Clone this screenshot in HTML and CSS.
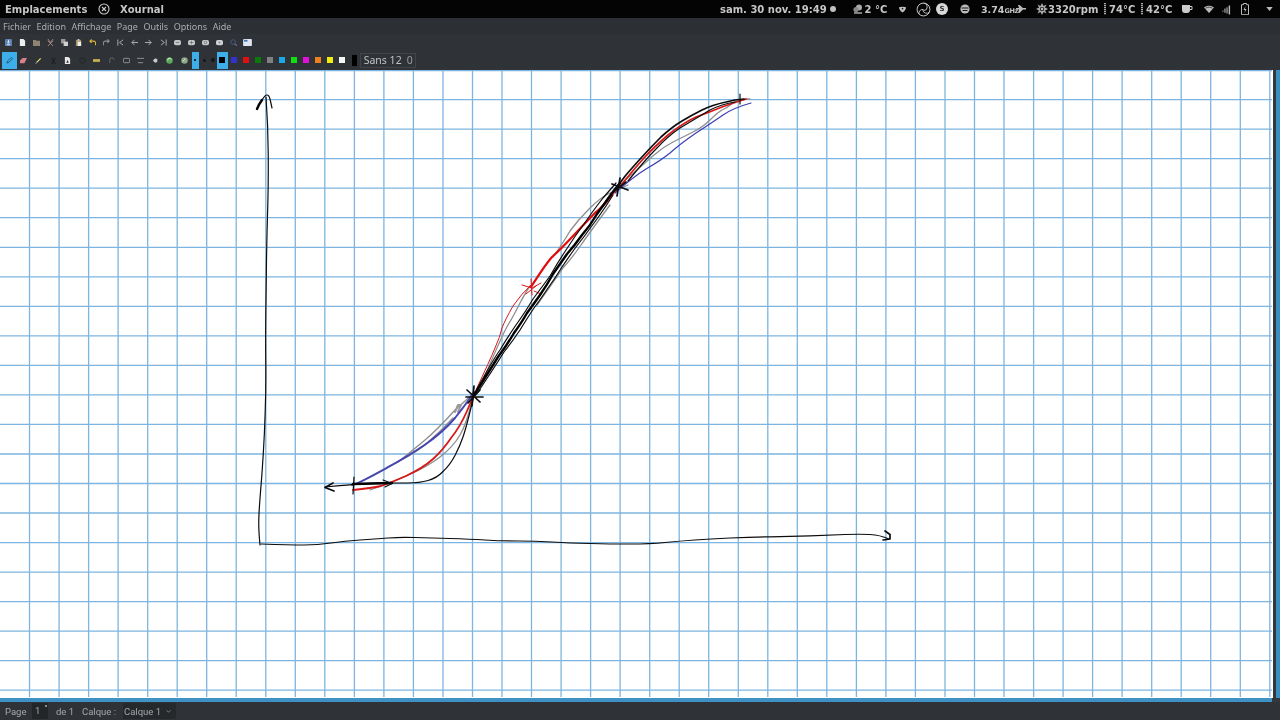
FILE: index.html
```html
<!DOCTYPE html>
<html lang="fr">
<head>
<meta charset="utf-8">
<title>Xournal</title>
<link rel="stylesheet" href="styles.css">
</head>
<body>
<div class="screen">
  <header class="topbar">
    <div class="top-left">
      <span class="places">Emplacements</span>
      <svg class="app-ico" viewBox="0 0 12 12"><circle cx="6" cy="6" r="5" fill="none" stroke="#ccc" stroke-width="1.1"/><path d="M4 4l4 4M8 4l-4 4" stroke="#ccc" stroke-width="1.1"/></svg>
      <span class="appname">Xournal</span>
    </div>
    <div class="top-right">
      <span class="clock">sam. 30 nov. 19:49</span>
      <i class="dot-w"></i>
      <svg class="t-ico weather" viewBox="0 0 10 10"><circle cx="6" cy="3.5" r="3" fill="#aaa"/><circle cx="3" cy="5.5" r="2.6" fill="#888"/><path d="M1 9h8" stroke="#aaa" stroke-width="1.5"/></svg>
      <span class="temp">2 °C</span>
      <svg class="t-ico shield" viewBox="0 0 8 8"><path d="M0 1.500C2 .5 6 .5 8 1.500 8 4 6 6 4 7.500 2 6 0 4 0 1.500z" fill="#c4c4c4"/><circle cx="4" cy="3" r="1" fill="#222"/></svg>
      <svg class="t-ico obs" viewBox="0 0 20 20"><circle cx="10" cy="10" r="8.6" fill="none" stroke="#c8c8c8" stroke-width="1.3"/><path d="M10 1.500a5 5 0 0 1 0 10M18 13a5 5 0 0 1-9-3M4 16a5 5 0 0 1 6-6" fill="none" stroke="#c8c8c8" stroke-width="1.200"/></svg>
      <span class="skype">S</span>
      <svg class="t-ico smile" viewBox="0 0 10 10"><circle cx="5" cy="5" r="4.6" fill="#bbb"/><path d="M1.500 4h7M2.500 6.500h5" stroke="#000" stroke-width=".9"/></svg>
      <span class="freq">3.74<small>GHz</small></span>
      <svg class="t-ico plane" viewBox="0 0 10 8"><path d="M0 3h3L2 0h1.500L7 3h3v1.500H7L3.500 8H2l1-3.500H0z" fill="#bbb"/></svg>
      <svg class="t-ico fan" viewBox="0 0 12 12"><circle cx="6" cy="6" r="1.4" fill="#bbb"/><path d="M6 0l2 4H4zM6 12l-2-4h4zM0 6l4-2v4zM12 6L8 8V4zM1.500 1.500l4 2-2 2zM10.500 10.500l-4-2 2-2zM10.500 1.500l-2 4-2-2zM1.500 10.500l2-4 2 2z" fill="#aaa"/></svg>
      <span class="rpm">3320rpm</span>
      <i class="gauge gauge-a"></i>
      <span class="heat">74°C</span>
      <i class="gauge gauge-b"></i>
      <span class="heat">42°C</span>
      <svg class="t-ico cup" viewBox="0 0 12 10"><path d="M1 1h8v5a3 3 0 0 1-3 3H4a3 3 0 0 1-3-3z" fill="#ccc"/><path d="M9 2.500h2v3H9" fill="none" stroke="#ccc"/></svg>
      <svg class="t-ico wifi" viewBox="0 0 10 8"><path d="M0 2.500C3 0 7 0 10 2.500L5 8z" fill="#bbb"/><path d="M1.500 3.200C4 1.800 6 1.800 8.500 3.200" stroke="#000" stroke-width=".6" fill="none"/></svg>
      <svg class="t-ico vol" viewBox="0 0 10 11"><path d="M.5 6.500h1V8h-1zM2.700 4.500h1.200V9H2.700zM5 3h1.200v7H5zM7.400 1H9v10H7.400z" fill="#bbb"/></svg>
      <svg class="t-ico batt" viewBox="0 0 8 12"><path d="M2.500.5h3v1.200h2v10H.5v-10h2z" fill="none" stroke="#bbb"/><path d="M4.500 3L2.500 7H4L3.500 10 5.500 6H4z" fill="#bbb"/></svg>
      <svg class="t-ico caret" viewBox="0 0 8 5"><path d="M0 0h8L4 5z" fill="#bbb"/></svg>
    </div>
  </header>

  <nav class="menubar">
    <span>Fichier</span><span>Edition</span><span>Affichage</span><span>Page</span><span>Outils</span><span>Options</span><span>Aide</span>
  </nav>

  <div class="toolbar-a">
    <span class="ta"><svg viewBox="0 0 8 8"><rect width="8" height="8" rx="1" fill="#5a7fb0"/><path d="M4 1v3M2.500 3L4 5l1.500-2M2 6.500h4" stroke="#e6eef8" fill="none"/></svg></span>
    <span class="ta"><svg viewBox="0 0 8 8"><path d="M1 0h4l2 2v6H1z" fill="#eee"/></svg></span>
    <span class="ta"><svg viewBox="0 0 8 8"><path d="M0 1h3l1 1h4v6H0z" fill="#8d8571"/></svg></span>
    <span class="ta"><svg viewBox="0 0 8 8"><path d="M1 0l3 4 3-4M1 8l6-6M7 8L1 2" stroke="#a98a8a" stroke-width="1.100" fill="none"/></svg></span>
    <span class="ta"><svg viewBox="0 0 8 8"><rect x="0" y="0" width="5" height="5" fill="#9a9a9a"/><rect x="3" y="3" width="5" height="5" fill="#d0d0d0"/></svg></span>
    <span class="ta"><svg viewBox="0 0 8 8"><rect x="1" y="1" width="6" height="7" fill="#a88f62"/><rect x="3" y="3" width="4" height="5" fill="#eee"/><rect x="3" y="0" width="2" height="2" fill="#ccc"/></svg></span>
    <span class="ta"><svg viewBox="0 0 8 8"><path d="M7.500 7V4.500a2 2 0 0 0-2-2H1M3 .5L1 2.500l2 2" stroke="#d8b23c" stroke-width="1.300" fill="none"/></svg></span>
    <span class="ta"><svg viewBox="0 0 8 8"><path d="M.5 7V4.500a2 2 0 0 1 2-2H7M5 .5l2 2-2 2" stroke="#8c8f92" stroke-width="1.300" fill="none"/></svg></span>
    <span class="ta"><svg viewBox="0 0 8 8"><path d="M1 .5v7M7 1L3 4l4 3" stroke="#aeb2b6" stroke-width="1.100" fill="none"/></svg></span>
    <span class="ta"><svg viewBox="0 0 8 8"><path d="M8 4H1M4 1L1 4l3 3" stroke="#aeb2b6" stroke-width="1.100" fill="none"/></svg></span>
    <span class="ta"><svg viewBox="0 0 8 8"><path d="M0 4h7M4 1l3 3-3 3" stroke="#aeb2b6" stroke-width="1.100" fill="none"/></svg></span>
    <span class="ta"><svg viewBox="0 0 8 8"><path d="M7 .5v7M1 1l4 3-4 3" stroke="#aeb2b6" stroke-width="1.100" fill="none"/></svg></span>
    <span class="ta"><svg viewBox="0 0 8 8"><rect y="1" width="8" height="6" rx="2" fill="#c4c6c8"/><path d="M2 4h4" stroke="#777"/></svg></span>
    <span class="ta"><svg viewBox="0 0 8 8"><rect y="1" width="8" height="6" rx="2" fill="#c4c6c8"/><path d="M4 2v4M2 4h4" stroke="#777"/></svg></span>
    <span class="ta"><svg viewBox="0 0 8 8"><rect y="1" width="8" height="6" rx="2" fill="#c4c6c8"/><circle cx="4" cy="4" r="1.500" fill="none" stroke="#777"/></svg></span>
    <span class="ta"><svg viewBox="0 0 8 8"><rect y="1" width="8" height="6" rx="2" fill="#d0d2d4"/><path d="M3 3h2v2H3z" fill="#888"/></svg></span>
    <span class="ta"><svg viewBox="0 0 8 8"><circle cx="3.500" cy="3.500" r="2.700" fill="none" stroke="#4a5a85" stroke-width="1.100"/><path d="M5.500 5.500L8 8" stroke="#6a7a9a" stroke-width="1.200"/></svg></span>
    <span class="ta"><svg viewBox="0 0 10 8"><rect width="10" height="8" rx="1" fill="#dfe6f0"/><rect x="1" y="1" width="4" height="2" fill="#3f78c0"/></svg></span>
  </div>

  <div class="toolbar-b">
    <span class="tb on"><svg viewBox="0 0 8 8"><path d="M1 7l1-2.500L6 .5 7.500 2 3.500 6z" fill="none" stroke="#26546f" stroke-width="1"/></svg></span>
    <span class="tb"><svg viewBox="0 0 8 8"><path d="M0 4l3-3h5L5 7H0z" fill="#d9808a"/></svg></span>
    <span class="tb"><svg viewBox="0 0 8 8"><path d="M1 7l1-2L6 1l1 1-4 4z" fill="#dcdc60"/><path d="M0 8l2-1" stroke="#7474c8"/></svg></span>
    <span class="tb"><svg viewBox="0 0 8 8"><path d="M2 1l4 7M6 1L2 8" stroke="#15171a" stroke-width="1"/></svg></span>
    <span class="tb"><svg viewBox="0 0 8 8"><path d="M1 0h4l2 2v6H1z" fill="#e8e8e8"/><path d="M2.500 6.500L4 3.500l1.500 3z" fill="#333"/></svg></span>
    <span class="tb"><svg viewBox="0 0 8 8"><circle cx="4" cy="4" r="3" fill="none" stroke="#1c1f23" stroke-dasharray="1.500 .7"/></svg></span>
    <span class="tb"><svg viewBox="0 0 10 6"><rect y="1" width="10" height="4" fill="#c4b04e"/></svg></span>
    <span class="tb"><svg viewBox="0 0 8 8"><path d="M2 7V4a2.500 2.500 0 0 1 5-1" fill="none" stroke="#6a6e72"/></svg></span>
    <span class="tb"><svg viewBox="0 0 8 8"><rect x=".5" y="1.500" width="7" height="5" rx="1" fill="none" stroke="#9a9ea2"/></svg></span>
    <span class="tb"><svg viewBox="0 0 8 8"><path d="M0 1.500h8M1 6.500h6" stroke="#9a9ea2"/></svg></span>
    <span class="tb"><svg viewBox="0 0 8 8"><path d="M1 4l3-3v1h2v4H4v1z" fill="#c8cacc"/></svg></span>
    <span class="tb"><svg viewBox="0 0 8 8"><circle cx="4" cy="4" r="3.700" fill="#5aa85a"/><path d="M2 4a2 2 0 0 1 4-1" stroke="#e4f0e4" fill="none"/></svg></span>
    <span class="tb"><svg viewBox="0 0 8 8"><circle cx="4" cy="4" r="3.700" fill="#88a888"/><path d="M2 5l3-3" stroke="#eee"/></svg></span>
    <span class="thin on"><i class="pt"></i></span>
    <span class="thin wide"><i class="pt mid"></i></span>
    <span class="thin wide2"><i class="pt big"></i></span>
    <span class="swatch-on"><i class="sq"></i></span>
    <i class="col c1"></i><i class="col c2"></i><i class="col c3"></i><i class="col c4"></i><i class="col c5"></i><i class="col c6"></i><i class="col c7"></i><i class="col c8"></i><i class="col c9"></i><i class="col c10"></i>
    <i class="blackbar"></i>
    <span class="fontbox">Sans 12<em>0</em></span>
  </div>

  <main class="workspace">
    <div class="view">
      <svg class="sheet" viewBox="0 70 1273 628">
        <rect x="0" y="70" width="1273" height="628" fill="#fff"/>
        <path class="grid" d="M29.500 70V697M59.100 70V697M88.600 70V697M118.100 70V697M147.700 70V697M177.200 70V697M206.700 70V697M236.200 70V697M265.800 70V697M295.300 70V697M324.800 70V697M354.400 70V697M383.900 70V697M413.400 70V697M443 70V697M472.500 70V697M502 70V697M531.500 70V697M561.100 70V697M590.600 70V697M620.100 70V697M649.700 70V697M679.200 70V697M708.700 70V697M738.300 70V697M767.800 70V697M797.300 70V697M826.800 70V697M856.400 70V697M885.900 70V697M915.400 70V697M945 70V697M974.500 70V697M1004 70V697M1033.600 70V697M1063.100 70V697M1092.600 70V697M1122.100 70V697M1151.700 70V697M1181.200 70V697M1210.700 70V697M1240.300 70V697M1269.800 70V697"/>
        <path class="grid" d="M0 70.500H1272M0 99.600H1272M0 129.100H1272M0 158.700H1272M0 188.200H1272M0 217.700H1272M0 247.300H1272M0 276.800H1272M0 306.300H1272M0 335.800H1272M0 365.400H1272M0 394.900H1272M0 424.400H1272M0 454H1272M0 483.500H1272M0 513H1272M0 542.600H1272M0 572.100H1272M0 601.600H1272M0 631.100H1272M0 660.700H1272M0 690.200H1272"/>

        <!-- axes -->
        <path class="ink k1" d="M266 97Q268 125 268.200 152Q268.500 180 267.800 205Q267 230 266.500 260Q266 290 265.800 315Q265.500 340 265.800 365Q266 390 265.200 412Q264.500 435 263.200 455Q262 475 260.500 492Q259 510 258.800 520Q258.500 530 260 545"/>
        <path class="ink k3" d="M257 109Q259 104 262 100"/>
        <path class="ink k1" d="M262 100Q265 95 267 95T270 99L272 108"/>
        <path class="ink k1" d="M261 544Q290 545 304 545Q318 545 331 543Q345 541 360 540Q375 539 388 538Q400 537 415 537.500Q430 538 450 538.500Q470 539 485 540Q500 541 518 541Q535 541 552 542Q570 543 590 543.500Q610 544 630 544Q650 544 665 542.500Q680 541 695 540Q710 539 730 538Q750 537 770 536.800Q790 536.500 810 535.800Q830 535 845 534.500Q860 534 870 534.500Q880 535 889 539"/>
        <path class="ink k2" d="M885 531L890 534.500 890 539 883 540"/>

        <!-- grey attempts -->
        <path class="ink g1" d="M356 484Q387 467 398 462Q413 450 425 440Q437 430 455 410L474 393"/>
        <path class="ink g1" d="M370 490Q393 482 410 474Q427 467 440 457Q453 447 460 435Q467 423 472 400"/>
        <path class="ink g1" d="M387 467Q410 457 425 445Q440 432 453 418"/>
        <path class="ink g2" d="M455 412L458 405 461 405 458 412"/>
        <path class="ink g1" d="M484 378Q503 333 508 325Q513 317 520 303Q527 290 530 286"/>
        <path class="ink g1" d="M553 257Q563 243 570 231Q578 220 589 209Q600 198 608 194Q617 190 628 185"/>
        <path class="ink g1" d="M537 305Q555 280 563 268Q572 258 581 245Q590 232 610 205"/>
        <path class="ink g1" d="M622 183Q645 163 654 155Q663 147 673 142Q683 137 693 132Q703 127 710 120Q717 113 722 110Q727 108 733 103Q740 99 750 99"/>

        <!-- blue -->
        <path class="ink b1" d="M352 485Q360 483 385 469Q410 455 426 444Q443 432 455 418Q467 403 474 392"/>
        <path class="ink b2" d="M615 193Q633 177 646 169Q660 161 670 153Q680 144 696 133Q713 122 723 115Q733 108 751 103"/>

        <!-- red -->
        <path class="ink r1" d="M353 490Q372 488 381 486Q390 483 406 476Q423 468 433 459Q443 450 451 438Q460 427 467 411Q473 397 475 392"/>
        <path class="ink r2" d="M476 390Q490 360 495 348Q500 337 502 328Q505 320 513 306Q522 293 531 285"/>
        <path class="ink r3" d="M531 287Q545 265 552 257Q560 250 574 235Q588 220 595 213Q603 207 610 197L617 188"/>
        <path class="ink r1" d="M617 190Q635 168 644 158Q653 148 668 135Q683 123 696 117Q710 112 722 107Q733 103 746 99"/>
        <path class="ink r2" d="M522 285L532 288 541 283M531 279L532 295M526 294L536 286M534 291L541 294"/>

        <!-- black curves -->
        <path class="ink k1" d="M325 487Q350 484.500 362 483.800Q375 483 385 483Q395 483 407 483Q420 483 428 480.500Q437 478 443 471.500Q450 465 455 455.500Q460 446 463.500 435.500Q467 425 474 395"/>
        <path class="ink k3" d="M353 484L392 483"/>
        <path class="ink k2" d="M333 483L325 487.500 334 491"/>
        <path class="ink k1" d="M354 477L353 494M383 480L392 483.500 385 487"/>
        <path class="ink k3" d="M474 395Q490 370 498 357Q507 345 514 333Q522 322 527 313Q533 305 540 295Q547 285 553 274Q560 264 567 254Q575 245 582 235Q590 226 597 214Q605 203 612 193L620 183"/>
        <path class="ink k1" d="M478 392Q496 365 504 352Q512 342 520 330Q528 317 534 308Q540 300 548 288Q556 277 562 267Q568 258 576 247Q584 237 591 227Q598 218 606 206L613 195"/>
        <path class="ink k1" d="M477 389Q494 358 500 350Q507 338 516 325Q526 311 533 299Q542 287 550 276Q558 262 566 250Q575 236 584 224Q595 208 603 198L616 183"/>
        <path class="ink k2" d="M612 193Q620 183 626 175Q632 168 641 158Q650 148 661 137Q672 127 682 121Q692 115 702 110Q712 105 726 102Q735 99.500 744 99"/>
        <path class="ink k1" d="M628 181Q645 160 656 149Q668 136 680 128Q695 119 710 110Q722 104 735 102"/>
        <path class="ink k2" d="M466 397H483M474 386L472 406M467 390L480 402M480 390L468 403"/>
        <path class="ink k2" d="M612 184L628 190M620 178L617 196M613 192L626 182"/>
        <path class="ink k1" d="M740 94V104"/>
      </svg>
      <div class="vscroll"></div>
    </div>
    <div class="hscroll"></div>
  </main>

  <footer class="statusbar">
    <span class="lbl-page">Page</span>
    <span class="spin">1<i class="spin-arrow"></i></span>
    <span class="lbl-of">de 1</span>
    <span class="lbl-layer">Calque :</span>
    <span class="combo">Calque 1<svg viewBox="0 0 6 4"><path d="M.5.500L3 3 5.500.500" fill="none" stroke="#9a9ea2"/></svg></span>
  </footer>
</div>
</body>
</html>
```

FILE: styles.css
```css
* { box-sizing: border-box; }
html, body { margin: 0; padding: 0; background: #2f3236; overflow: hidden; }
.screen {
  width: 1280px; height: 720px; display: flex; flex-direction: column;
  font-family: "Noto Sans", sans-serif; filter: blur(.35px);
}
.topbar {
  height: 18px; background: #040404; display: flex; justify-content: space-between;
  align-items: center; font-family: "DejaVu Sans", sans-serif; font-weight: bold;
  font-size: 10px; color: #c6c6c6; flex: none;
}
.top-left { display: flex; align-items: center; padding-left: 5px; }
.places { width: 87px; }
.app-ico { width: 12px; height: 12px; margin-left: 6px; }
.appname { margin-left: 10px; }
.top-right { display: flex; align-items: center; padding-right: 7px; }
.top-right > * { flex: none; }
.t-ico { display: block; }
.clock { width: 107px; white-space: nowrap; }
.dot-w { width: 6px; height: 6px; border-radius: 50%; background: #c0c0c0; margin-left: 2.500px; }
.weather { width: 10px; height: 10px; margin-left: 17px; }
.temp { margin-left: 2px; width: 20px; white-space: nowrap; }
.shield { width: 7px; height: 7px; margin-left: 14px; }
.obs { width: 15px; height: 15px; margin-left: 10.500px; }
.skype { width: 12px; height: 12px; border-radius: 50%; background: #d8d8d8; color: #333; font-size: 7px; line-height: 12px; text-align: center; margin-left: 5px; }
.smile { width: 10px; height: 10px; margin-left: 11.500px; }
.freq { margin-left: 11.500px; font-size: 9.500px; width: 32px; white-space: nowrap; }
.freq small { font-size: 6.500px; font-weight: bold; letter-spacing: -.4px; }
.plane { width: 10px; height: 8px; margin-left: 3px; }
.fan { width: 12px; height: 12px; margin-left: 10px; }
.rpm { width: 50px; white-space: nowrap; }
.gauge { width: 2px; height: 12px; background: repeating-linear-gradient(#aaa 0 1px, #333 1px 2px); }
.gauge-a { margin-left: 6px; margin-right: 3px; }
.heat { width: 26px; white-space: nowrap; }
.gauge-b { margin-left: 6px; margin-right: 3px; }
.cup { width: 12px; height: 10px; margin-left: 9px; }
.wifi { width: 10px; height: 8px; margin-left: 11px; }
.vol { width: 9px; height: 11px; margin-left: 8px; }
.batt { width: 8px; height: 12px; margin-left: 10px; }
.caret { width: 7px; height: 4px; margin-left: 17px; }

.menubar {
  height: 16px; background: #2c2f33; display: flex; align-items: center; gap: 5.500px;
  padding-left: 3px; font-size: 9px; color: #a9adb1; flex: none; white-space: nowrap;
}
.toolbar-a { height: 16px; background: #2f3236; display: flex; align-items: center; padding-left: 1px; flex: none; }
.ta { width: 14.100px; height: 16px; display: flex; align-items: center; justify-content: center; }
.ta svg { width: 7px; height: 7px; display: block; }
.ta:last-child svg { width: 9px; }
.toolbar-b { height: 20px; background: #2f3236; display: flex; align-items: center; padding-left: 2px; flex: none; }
.tb { width: 14.600px; height: 17px; display: flex; align-items: center; justify-content: center; }
.tb svg { width: 7px; height: 7px; display: block; }
.tb.on, .thin.on, .swatch-on { background: #3daee9; }
.thin { height: 17px; width: 7px; display: flex; align-items: center; justify-content: center; }
.thin.wide { width: 10px; margin-left: 1px; }
.thin.wide2 { width: 7px; }
.pt { border-radius: 50%; background: #15171a; display: block; width: 1.500px; height: 1.500px; }
.pt.mid { width: 3px; height: 3px; }
.pt.big { width: 4px; height: 4px; }
.swatch-on { width: 11px; height: 17px; display: flex; align-items: center; justify-content: center; }
.sq { width: 6px; height: 6px; background: #000; display: block; }
.col { width: 6px; height: 6px; display: block; margin: 0 3px; }
.c1 { background: #3333cc; }
.c2 { background: #e01010; }
.c3 { background: #0b7a0b; }
.c4 { background: #808080; }
.c5 { background: #1aa9e5; }
.c6 { background: #10e010; }
.c7 { background: #e010d8; }
.c8 { background: #ee8020; }
.c9 { background: #f0ee10; }
.c10 { background: #f6f6f6; }
.blackbar { width: 5px; height: 11px; background: #000; margin-left: 4px; display: block; }
.fontbox {
  margin-left: 3px; width: 56px; height: 15px; border: 1px solid #41454a; padding-left: 3px;
  font-size: 10.500px; line-height: 13px; color: #c0c3c6; white-space: nowrap;
}
.fontbox em { font-style: normal; margin-left: 5px; color: #9a9ea2; }

.workspace { flex: 1; display: flex; flex-direction: column; min-height: 0; background: #34373b; }
.view { flex: 1; display: flex; min-height: 0; }
.sheet { width: 1273px; height: 628px; display: block; flex: none; }
.vscroll { margin-left: 3px; width: 4px; background: #3a8fc2; }
.hscroll { width: 1272px; height: 4px; background: #3f93c4; flex: none; }
.grid { fill: none; stroke: #7db5e0; stroke-width: 1.300; }
.ink { fill: none; stroke-linecap: round; stroke-linejoin: round; }
.k1 { stroke: #0c0c0c; stroke-width: 1.200; }
.k2 { stroke: #0c0c0c; stroke-width: 1.700; }
.k3 { stroke: #000; stroke-width: 2.400; }
.g1 { stroke: #8e8e8e; stroke-width: 1.300; }
.g2 { stroke: #9a9a9a; stroke-width: 2; }
.b1 { stroke: #4545b4; stroke-width: 2; }
.b2 { stroke: #3d3db4; stroke-width: 1.200; }
.r1 { stroke: #d81818; stroke-width: 1.800; }
.r2 { stroke: #d81818; stroke-width: 1; }
.r3 { stroke: #e00c0c; stroke-width: 2.200; }

.statusbar {
  height: 18px; background: #2f3236; display: flex; align-items: center; flex: none;
  font-size: 9.500px; color: #a4a8ac; font-family: Roboto, sans-serif; white-space: nowrap;
}
.lbl-page { margin-left: 5px; width: 27px; }
.spin { width: 16px; height: 16px; background: #232629; line-height: 16px; padding-left: 3px; position: relative; }
.spin-arrow { position: absolute; right: 1px; top: 2px; width: 2px; height: 2px; background: #8a8e92; }
.lbl-of { margin-left: 8px; width: 26px; }
.lbl-layer { width: 41px; }
.combo { width: 53px; height: 16px; background: #26292c; padding-left: 1px; display: flex; align-items: center; }
.combo svg { width: 5px; height: 3px; margin-left: 5px; display: block; }
```
